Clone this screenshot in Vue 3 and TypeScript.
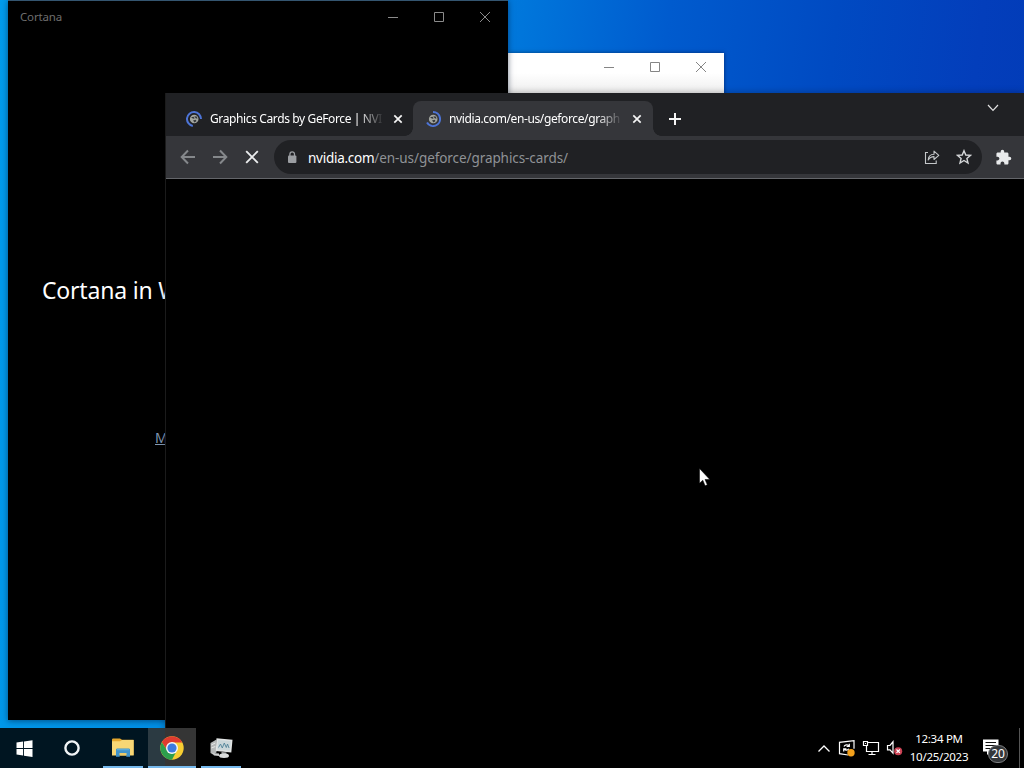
<script setup lang="ts">
interface Tab {
  title: string
  active: boolean
}

const tabs: Tab[] = [
  { title: 'Graphics Cards by GeForce | NVI', active: false },
  { title: 'nvidia.com/en-us/geforce/graph', active: true },
]
</script>

<template>
  <main class="desktop">
    <section class="window blank">
      <header class="captions">
        <svg v-for="k in 3" :key="k" width="12" height="12" viewBox="0 0 12 12">
          <path v-if="k === 1" d="M1 6.5h10" />
          <path v-else-if="k === 2" d="M1.5 1.5h9v9h-9z" />
          <path v-else d="M1 1l10 10M11 1L1 11" />
        </svg>
      </header>
    </section>

    <section class="window cortana">
      <header class="cortana-bar">
        <span class="cortana-name">Cortana</span>
        <div class="captions dim">
          <svg v-for="k in 3" :key="k" width="12" height="12" viewBox="0 0 12 12">
            <path v-if="k === 1" d="M1 6.5h10" />
            <path v-else-if="k === 2" d="M1.5 1.5h9v9h-9z" />
            <path v-else d="M1 1l10 10M11 1L1 11" />
          </svg>
        </div>
      </header>
      <h1>Cortana in W</h1>
      <a class="more">M</a>
    </section>

    <section class="window chrome">
      <header class="tabstrip">
        <div v-for="(tab, i) in tabs" :key="tab.title" class="tab" :class="{ active: tab.active }">
          <svg class="favicon" width="16" height="16" viewBox="0 0 16 16">
            <circle cx="8.2" cy="8" r="4.300" fill="#a3a6a0" />
            <path d="M5 6.300l2.600-.6 1.200 1.500-1.600.6zM8.300 5.200l2.400.3.900 2.100-1.700-.2zM7 9.600l2.600-.9.900 1.200-1.900 1.500z" fill="#35383b" />
            <path v-if="i === 0" d="M6.800 14.900A7 7 0 1 1 15 8" fill="none" stroke="#4d74d6" stroke-width="2" />
            <path v-else d="M8 1A7 7 0 1 1 2 11.500" fill="none" stroke="#4d74d6" stroke-width="2" />
          </svg>
          <span class="title">{{ tab.title }}</span>
          <svg class="close" width="10" height="10" viewBox="0 0 10 10"><path d="M1.300 1.300l7.400 7.400M8.700 1.300L1.300 8.700" /></svg>
        </div>
        <svg class="plus" width="12" height="12" viewBox="0 0 12 12"><path d="M6 0v12M0 6h12" /></svg>
        <svg class="chevron" width="12" height="8" viewBox="0 0 12 8"><path d="M1 1l5 5.400L11 1" /></svg>
      </header>
      <div class="toolbar">
        <svg class="nav" width="16" height="16" viewBox="0 0 16 16"><path d="M15 8H2M8 1.500L1.700 8 8 14.500" /></svg>
        <svg class="nav" width="16" height="16" viewBox="0 0 16 16"><path d="M1 8h13M8 1.500L14.300 8 8 14.500" /></svg>
        <svg class="nav stop" width="16" height="16" viewBox="0 0 16 16"><path d="M2.200 2.200l11.600 11.600M13.800 2.200L2.200 13.800" /></svg>
        <div class="omnibox">
          <svg class="lock" width="10" height="13" viewBox="0 0 10 13">
            <rect x="1" y="4.500" width="8.400" height="7.500" rx="1" fill="#9b9ea2" />
            <path d="M2.900 5V3.200a2.300 2.300 0 0 1 4.600 0V5" fill="none" stroke="#9b9ea2" stroke-width="1.300" />
          </svg>
          <span class="url"><b>nvidia.com</b>/en-us/geforce/graphics-cards/</span>
          <svg class="share" width="16" height="16" viewBox="0 0 16 16" fill="none" stroke="#c4c7c9" stroke-width="1.100">
            <path d="M4 3.500H1.500v11h10.700v-3" />
            <path d="M4.200 11c.2-3.500 2-5.600 5.800-5.700V2.100l4.800 4.200-4.800 4.200V7.600c-2.700 0-4.400 1-5.800 3.400z" stroke-linejoin="round" />
          </svg>
          <svg class="star" width="16" height="16" viewBox="0 0 16 16">
            <path d="M8 1.700l1.800 4.300 4.700.4-3.600 3 1.100 4.600L8 11.500 4 14l1.100-4.600-3.600-3 4.700-.4z" fill="none" stroke="#d5d7d9" stroke-width="1.400" />
          </svg>
        </div>
        <svg class="puzzle" width="17" height="17" viewBox="0 0 24 24">
          <path fill="#e9ebec" d="M20.500 11H19V7c0-1.100-.9-2-2-2h-4V3.500a2.500 2.500 0 0 0-5 0V5H4c-1.100 0-1.990.9-1.990 2v3.800H3.500c1.490 0 2.700 1.210 2.700 2.700s-1.210 2.700-2.700 2.700H2V20c0 1.100.9 2 2 2h3.800v-1.500c0-1.490 1.210-2.700 2.700-2.700s2.700 1.210 2.700 2.700V22H17c1.100 0 2-.9 2-2v-4h1.500a2.500 2.500 0 0 0 0-5z" />
        </svg>
      </div>
    </section>

    <footer class="taskbar">
      <div class="launcher">
        <svg width="17" height="17" viewBox="0 0 17 17" fill="#fff">
          <path d="M.5 2.600l6.600-1v6.500H.5zM8 1.400L16.500.2v7.900H8zM.5 9h6.600v6.500l-6.600-1zM8 9h8.500v7.900L8 15.700z" />
        </svg>
      </div>
      <div class="launcher">
        <svg width="16" height="16" viewBox="0 0 16 16"><circle cx="8" cy="8" r="6.600" fill="none" stroke="#f1f4f5" stroke-width="2.400" /></svg>
      </div>
      <div class="launcher running">
        <svg width="22" height="19" viewBox="0 0 22 19">
          <path d="M0 2c0-1 .4-1.500 1.200-1.500H8l2 1.300h11.500V17H0z" fill="#e5a72d" />
          <path d="M0 3.300h8l2-1.200h11.700V17.500H0z" fill="#f8d775" />
          <path d="M4 18.700v-6.800c0-1 .5-1.500 1.500-1.500h11c1 0 1.500.5 1.500 1.500v6.800h-3.700v-3.700H7.700v3.700z" fill="#3f93ca" />
          <path d="M7.700 15h6.600v2.500H7.700z" fill="#eac967" />
          <path d="M5 11.200h12v1H5z" fill="#65b3df" />
        </svg>
      </div>
      <div class="launcher running current">
        <svg width="24" height="24" viewBox="0 0 24 24">
          <circle cx="12" cy="12" r="11.700" fill="#f7cd32" />
          <path d="M12 12L1.870 6.150A11.700 11.700 0 0 1 22.130 6.150L22.300 6.600H12z" fill="#df3b30" />
          <path d="M1.870 6.150L7.330 14.700 12 12 10 6.600z" fill="#df3b30" />
          <path d="M1.870 6.150A11.700 11.700 0 0 0 12 23.700L16.700 14.700 12 17.400a5.400 5.400 0 0 1-4.700-2.700z" fill="#2c9f4d" />
          <circle cx="12" cy="12" r="6" fill="#f4f6f8" />
          <circle cx="12" cy="12" r="4.600" fill="#3c7be0" />
        </svg>
      </div>
      <div class="launcher running">
        <svg width="23" height="22" viewBox="0 0 23 22">
          <path d="M.5 6l6-3.500v13L3 17.500.5 16z" fill="#b6b9b9" />
          <path d="M1.300 8l4-2M1.300 11l4-1.500" stroke="#e7e8e8" fill="none" />
          <path d="M6.500 1.200l16 1.500-1.200 12.800-15.500-1.600z" fill="#e2e5e5" />
          <path d="M8 3l12.800 1.100-.9 9.500L7.300 12.400z" fill="#cbd7da" />
          <path d="M8.500 10.500l2-3.500 1.800 4 2-5 2 4.500 1.200-3.500 1.500 4" fill="none" stroke="#4f8298" stroke-width=".9" />
          <path d="M11.500 15l5 .4v2.200h-5z" fill="#a5a8a8" />
          <ellipse cx="14" cy="18.800" rx="5" ry="2.200" fill="#dcdede" />
          <path d="M2 16l7 .5v2.500l-5-.4z" fill="#cfd1d1" />
        </svg>
      </div>

      <div class="tray">
        <svg class="up" width="14" height="9" viewBox="0 0 14 9"><path d="M1.500 7.500L7 2l5.500 5.500" /></svg>
        <svg class="update" width="18" height="18" viewBox="0 0 18 18" fill="none" stroke="#fff" stroke-width="1.200">
          <path d="M10 16L1.500 14.700V3.300L16 1.600v8.200" />
          <path d="M6 7.500c.7-1.900 3.500-2.200 4.800-.7M11.300 4.800v2.700H8.600M10.800 9.700c-.9 1.700-3.300 2-4.600.5M5.700 12.500V9.800h2.700" />
          <circle cx="13" cy="13.800" r="3.700" fill="#f4a11c" stroke="none" />
        </svg>
        <svg class="network" width="18" height="17" viewBox="0 0 18 17" fill="none" stroke="#fff" stroke-width="1.200">
          <path d="M6 2.500h10.500v9H4.500V6M10 12v3M6.500 14.500h7" />
          <path d="M1.500 1.500h4v4h-4zM3 3.500h1" />
        </svg>
        <svg class="sound" width="17" height="16" viewBox="0 0 17 16" fill="none" stroke="#fff" stroke-width="1.200">
          <path d="M1.500 5.500H4l3-3.700v11.400L4 9.800H1.500z" />
          <circle cx="12.200" cy="11.200" r="4" fill="#cb4254" stroke="none" />
          <path d="M10.500 9.500l3.400 3.400M13.900 9.500l-3.400 3.400" />
        </svg>
      </div>
      <div class="clock">
        <span class="time">12:34 PM</span>
        <span class="date">10/25/2023</span>
      </div>
      <div class="notify">
        <svg width="18" height="17" viewBox="0 0 18 17">
          <path d="M1 .5h15.500v12H8.500L5 16v-3.500H1z" fill="#fff" />
          <path d="M3.500 3.500h10.500M3.500 6.500h10.500M3.500 9.500h7" stroke="#111" stroke-width="1.200" />
        </svg>
        <span class="count">20</span>
      </div>
      <i class="peek"></i>
    </footer>

    <svg class="pointer" width="12" height="19" viewBox="0 0 12 19">
      <path d="M.5.500v14.800l3.300-3.100 2.300 5.600 2.200-1-2.300-5.300h4.800z" fill="#fff" stroke="#000" stroke-width=".5" />
    </svg>
  </main>
</template>

<style>
body {
  margin: 0;
  overflow: hidden;
}
</style>

<style scoped>
.desktop {
  position: relative;
  width: 1024px;
  height: 768px;
  overflow: hidden;
  font-family: 'Noto Sans', 'Open Sans', sans-serif;
  font-size: 12px;
  background: linear-gradient(97deg, #009cec 0, #0284df 40%, #0076db 47%, #005bce 60%, #004ac2 75%, #033ebb 88%, #0139b4 100%);
}
svg {
  display: block;
  flex: none;
}
.window {
  position: absolute;
  box-sizing: border-box;
}
.blank {
  left: 508px;
  top: 53px;
  width: 216px;
  height: 120px;
  background: linear-gradient(#fff 20px, #eee 40px);
  box-shadow: 0 0 4px rgba(0, 0, 20, 0.5);
}
.captions {
  display: flex;
  justify-content: flex-end;
  gap: 34px;
  padding: 8px 17px 0 0;
}
.captions path {
  fill: none;
  stroke: #858585;
  stroke-width: 1;
}
.captions.dim {
  padding: 0;
}
.captions.dim path {
  stroke: #8b8b8b;
}
.cortana {
  left: 8px;
  top: 0;
  width: 500px;
  height: 720px;
  border-top: 1px solid #345570;
  background: #000;
  box-shadow: 0 1px 6px rgba(0, 20, 50, 0.55);
}
.cortana-bar {
  display: flex;
  justify-content: space-between;
  align-items: center;
  height: 32px;
  padding: 0 17px 0 12px;
}
.cortana-name {
  margin-top: -1px;
  color: #6e6e6e;
  font-size: 11.500px;
  letter-spacing: -0.150px;
}
h1 {
  margin: 239px 0 0 34px;
  color: #fff;
  font-size: 23px;
  line-height: 36px;
  font-weight: 400;
  letter-spacing: -0.200px;
  white-space: nowrap;
}
.more {
  display: block;
  margin: 120px 0 0 147px;
  color: #8299b5;
  font-size: 14px;
  line-height: 20px;
  text-decoration: underline;
}
.chrome {
  left: 165px;
  top: 93px;
  width: 859px;
  height: 675px;
  border-left: 1px solid #1b1b1b;
  background: #000;
  box-shadow: 0 0 7px rgba(0, 0, 0, 0.3);
}
.tabstrip {
  display: flex;
  align-items: flex-end;
  height: 43px;
  padding-left: 8px;
  background: #202124;
}
.tab {
  position: relative;
  display: flex;
  align-items: center;
  box-sizing: border-box;
  width: 239px;
  height: 35px;
  padding: 0 10px 0 12px;
  border-radius: 8px 8px 0 0;
  color: #fff;
}
.tab.active {
  width: 240px;
  padding-right: 11px;
  background: #35363a;
}
.tab.active::before,
.tab.active::after {
  content: '';
  position: absolute;
  bottom: 0;
  left: -8px;
  width: 8px;
  height: 8px;
  background: radial-gradient(circle at 0 0, transparent 7.500px, #35363a 8px);
}
.tab.active::after {
  left: auto;
  right: -8px;
  background: radial-gradient(circle at 100% 0, transparent 7.500px, #35363a 8px);
}
.title {
  width: 172px;
  margin: 1px 0 0 8px;
  white-space: nowrap;
  font-size: 12px;
  line-height: 18px;
  letter-spacing: -0.380px;
  mask-image: linear-gradient(90deg, #000 148px, transparent 174px);
}
.close {
  margin-left: auto;
}
.close path,
.plus path {
  fill: none;
  stroke: #f5f5f5;
  stroke-width: 1.700;
}
.plus {
  margin: 0 0 11px 16px;
}
.plus path {
  stroke-width: 2;
}
.chevron {
  margin: 0 25px 24px auto;
}
.chevron path {
  fill: none;
  stroke: #e2e2e2;
  stroke-width: 1.200;
}
.toolbar {
  display: flex;
  align-items: center;
  height: 42px;
  padding-left: 14px;
  border-bottom: 1px solid #64666a;
  background: #35363a;
}
.nav {
  margin-right: 16px;
}
.nav path {
  fill: none;
  stroke: #85888b;
  stroke-width: 2;
}
.stop {
  margin-right: 14px;
}
.stop path {
  stroke: #eceeef;
  stroke-width: 1.900;
}
.omnibox {
  display: flex;
  align-items: center;
  box-sizing: border-box;
  width: 708px;
  height: 34px;
  padding: 0 10px 0 13px;
  border-radius: 17px;
  background: #202124;
}
.url {
  margin: 1px auto 0 11px;
  color: #8f9296;
  font-size: 13.500px;
  letter-spacing: -0.080px;
  white-space: nowrap;
}
.url b {
  color: #fff;
  font-weight: 400;
  letter-spacing: -0.260px;
}
.star {
  margin-left: 16px;
}
.puzzle {
  margin-left: 13px;
}
.taskbar {
  position: absolute;
  left: 0;
  top: 728px;
  display: flex;
  align-items: center;
  width: 1024px;
  height: 40px;
  background: linear-gradient(90deg, #001521 165px, #000 165px);
}
.launcher {
  display: flex;
  align-items: center;
  justify-content: center;
  box-sizing: border-box;
  width: 48px;
  height: 40px;
}
.running {
  width: 40px;
  margin-left: 7px;
  border-bottom: 2px solid #76b9ed;
  padding-top: 1px;
}
.running + .running {
  margin-left: 5px;
}
.running.current {
  width: 48px;
  background: linear-gradient(90deg, #2b3a42 17px, #353535 17px);
}
.tray {
  display: flex;
  align-items: center;
  gap: 6px;
  margin-left: auto;
}
.up {
  margin-right: 1px;
}
.up path {
  fill: none;
  stroke: #fff;
  stroke-width: 1.300;
}
.clock {
  display: flex;
  flex-direction: column;
  align-items: center;
  width: 58px;
  margin-left: 7px;
  color: #fff;
  font-size: 11.500px;
  line-height: 18px;
  letter-spacing: -0.280px;
  white-space: nowrap;
}
.notify {
  position: relative;
  width: 28px;
  height: 18px;
  margin-left: 14px;
}
.count {
  position: absolute;
  left: 6px;
  top: 6px;
  width: 18px;
  height: 16px;
  border: 1px solid #7c7e80;
  border-radius: 10px;
  background: #34373a;
  color: #fff;
  font-size: 12px;
  line-height: 16px;
  text-align: center;
}
.peek {
  width: 1px;
  height: 40px;
  margin: 0 4px 0 9px;
  background: #555;
}
.pointer {
  position: absolute;
  left: 699px;
  top: 468px;
}
</style>
